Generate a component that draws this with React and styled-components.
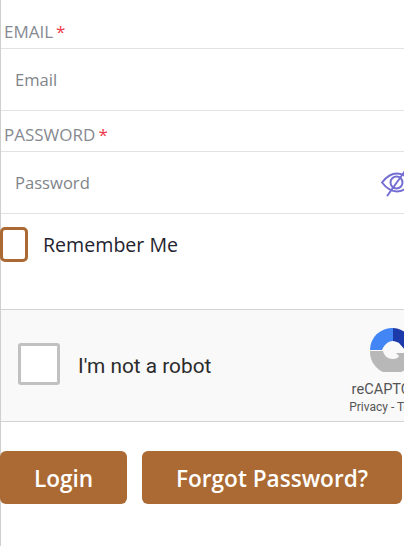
import React from "react";
import styled, { createGlobalStyle } from "styled-components";

const GlobalStyle = createGlobalStyle`
  html, body {
    margin: 0;
    padding: 0;
    background: #fff;
    overflow: hidden;
  }
`;

const Page = styled.div`
  box-sizing: border-box;
  width: 404px;
  height: 546px;
  border-left: 1px solid #cfcfcf;
  font-family: "Open Sans", "Noto Sans", sans-serif;
`;

const LabelRow = styled.div`
  display: flex;
  align-items: flex-end;
  box-sizing: border-box;
  height: ${({ $height }) => $height}px;
  padding: 0 0 5px 3px;
  border-bottom: 1px solid #e2e2e2;
  font-size: 17px;
  line-height: 23px;
  color: #868a90;
`;

const Required = styled.span`
  margin-left: 3px;
  color: #f0384a;
`;

const InputRow = styled.div`
  display: flex;
  align-items: center;
  justify-content: space-between;
  box-sizing: border-box;
  height: 62px;
  padding-left: 14px;
  border-bottom: 1px solid #e2e2e2;
  overflow: hidden;
`;

const Input = styled.input`
  flex: 1;
  min-width: 0;
  padding: 0;
  border: 0;
  outline: 0;
  background: transparent;
  font: 400 16.6px "Open Sans", "Noto Sans", sans-serif;
  color: #333;

  &::placeholder {
    color: #808489;
    opacity: 1;
  }
`;

const EyeIcon = styled.svg`
  flex-shrink: 0;
  width: 30px;
  height: 28px;
  margin-right: -7px;
  color: #746ed4;
`;

const RememberRow = styled.label`
  display: flex;
  align-items: center;
  gap: 15px;
  height: 35px;
  margin: 13px 0 47px;
  font-size: 19.6px;
  color: #1f2430;
`;

const RememberBox = styled.span`
  box-sizing: border-box;
  width: 28px;
  height: 35px;
  margin-left: -1px;
  border: 3px solid #ab6a33;
  border-radius: 5px;
  background: #fff;
`;

const Captcha = styled.div`
  display: flex;
  align-items: center;
  justify-content: space-between;
  box-sizing: border-box;
  width: 403px;
  height: 113px;
  overflow: hidden;
  background: #f9f9f9;
  border-top: 1px solid #d3d3d3;
  border-bottom: 1px solid #d3d3d3;
  font-family: Roboto, sans-serif;
`;

const CaptchaCheck = styled.div`
  display: flex;
  align-items: center;
  gap: 18px;
  padding-left: 17px;
`;

const CaptchaBox = styled.span`
  box-sizing: border-box;
  width: 42px;
  height: 42px;
  margin-bottom: 4px;
  border: 3px solid #c1c1c1;
  border-radius: 3px;
  background: #fff;
`;

const CaptchaText = styled.span`
  font-size: 20.8px;
  color: #2b2b2b;
`;

const CaptchaBrand = styled.div`
  display: flex;
  flex-direction: column;
  align-items: center;
  flex-shrink: 0;
  width: 90px;
  margin-right: -31px;
  padding-top: 10px;
`;

const CaptchaLogo = styled.svg`
  width: 44px;
  height: 44px;
  margin-left: 4px;
`;

const CaptchaName = styled.span`
  margin: 9px 0 0 2px;
  font-size: 14.6px;
  line-height: 16px;
  color: #555;
`;

const CaptchaLinks = styled.span`
  margin-top: 4px;
  font-size: 12px;
  line-height: 13px;
  color: #555;
  white-space: nowrap;
`;

const Actions = styled.div`
  display: flex;
  gap: 15px;
  margin-top: 29px;
`;

const Button = styled.button`
  box-sizing: border-box;
  width: ${({ $width }) => $width}px;
  height: 53px;
  margin-left: ${({ $offset }) => $offset || 0}px;
  padding: 2px 0 0;
  border: 0;
  border-radius: 6px;
  background: #ab6a33;
  color: #fff;
  font: 600 22.6px "Open Sans", "Noto Sans", sans-serif;
`;

const App = () => (
  <>
    <GlobalStyle />
    <Page>
      <LabelRow $height={49}>
        EMAIL<Required>*</Required>
      </LabelRow>
      <InputRow>
        <Input placeholder="Email" />
      </InputRow>
      <LabelRow $height={41}>
        PASSWORD<Required>*</Required>
      </LabelRow>
      <InputRow>
        <Input placeholder="Password" />
        <EyeIcon viewBox="0 0 30 28" fill="none" stroke="currentColor" strokeWidth="2" strokeLinecap="round" strokeLinejoin="round">
          <path d="M1 13.5C6 7 11 4.5 16 4.5s10 2.5 14 9c-4 6.5-9 9-14 9s-10-2.5-15-9z" />
          <circle cx="15.5" cy="13.5" r="6" />
          <path d="M6.5 26.5L24 2" />
        </EyeIcon>
      </InputRow>
      <RememberRow>
        <RememberBox />
        Remember Me
      </RememberRow>
      <Captcha>
        <CaptchaCheck>
          <CaptchaBox />
          <CaptchaText>I'm not a robot</CaptchaText>
        </CaptchaCheck>
        <CaptchaBrand>
          <CaptchaLogo viewBox="0 0 44 44">
            <path d="M23 0A22 22 0 0 1 44 22H35L29 15C27 14 25 13 23 13Z" fill="#1c3aa9" />
            <path d="M0 22A22 22 0 0 1 23 0V13C18 13 14 17 12 22Z" fill="#4285f4" />
            <path d="M0 23H13C14 28 18 31 23 31C26 31 28 30 29 28L26 25H44A22 22 0 0 1 0 23Z" fill="#b8b8b8" />
          </CaptchaLogo>
          <CaptchaName>reCAPTCHA</CaptchaName>
          <CaptchaLinks>Privacy - Terms</CaptchaLinks>
        </CaptchaBrand>
      </Captcha>
      <Actions>
        <Button $width={127} $offset={-1}>Login</Button>
        <Button $width={260}>Forgot Password?</Button>
      </Actions>
    </Page>
  </>
);

export default App;
